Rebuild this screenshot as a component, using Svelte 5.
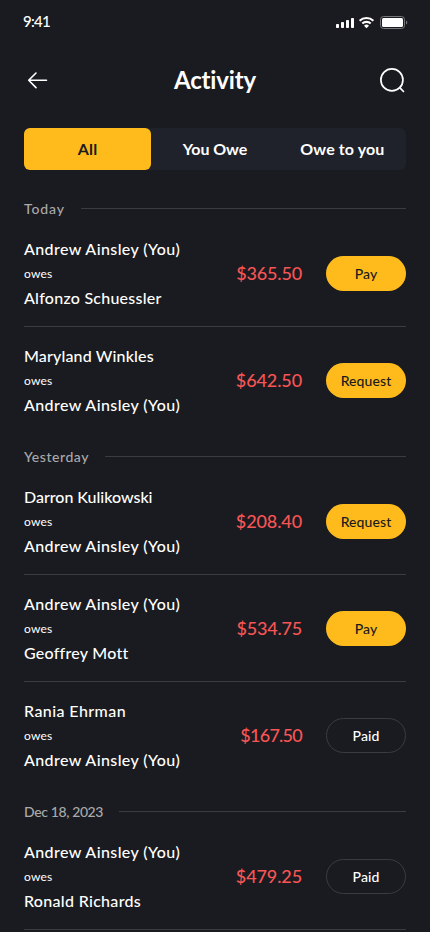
<script>
  const me = { name: 'Andrew Ainsley (You)', track: 0.4 };
  const tabs = [
    { name: 'All', track: 0.2 },
    { name: 'You Owe', track: -0.05 },
    { name: 'Owe to you', track: 0.1 }
  ];
  let active = $state(0);
  const groups = [
    { day: 'Today', track: 0.85, rows: [
      { from: me, to: { name: 'Alfonzo Schuessler', track: 0.25 }, amount: '$365.50', tight: -0.15, action: 'Pay' },
      { from: { name: 'Maryland Winkles', track: 0.15 }, to: me, amount: '$642.50', tight: -0.1, action: 'Request' }
    ] },
    { day: 'Yesterday', track: 0.55, rows: [
      { from: { name: 'Darron Kulikowski', track: -0.02 }, to: me, amount: '$208.40', tight: -0.1, action: 'Request' },
      { from: me, to: { name: 'Geoffrey Mott', track: 0.25 }, amount: '$534.75', tight: -0.2, action: 'Pay' },
      { from: { name: 'Rania Ehrman', track: 0.42 }, to: me, amount: '$167.50', tight: -0.75, action: 'Paid' }
    ] },
    { day: 'Dec 18, 2023', track: -0.38, rows: [
      { from: me, to: { name: 'Ronald Richards', track: 0.31 }, amount: '$479.25', tight: -0.1, action: 'Paid' }
    ] }
  ];
</script>

<div class="screen">
  <div class="status">
    <span class="time">9:41</span>
    <svg class="system" width="72" height="16" viewBox="0 0 72 16" fill="none">
      <g fill="#fff">
        <rect x="0" y="9" width="3" height="4" rx=".8" />
        <rect x="5" y="7" width="3" height="6" rx=".8" />
        <rect x="10" y="5" width="3" height="8" rx=".8" />
        <rect x="15" y="3" width="3" height="10" rx=".8" />
      </g>
      <path d="M23.600 5.700a10 10 0 0 1 13.800 0M26.300 8.600a6.100 6.100 0 0 1 8.400 0" stroke="#fff" stroke-width="2.100" />
      <path d="M28 10.700a3.600 3.600 0 0 1 5 0L30.500 13.300Z" fill="#fff" />
      <rect x="44.500" y="1.500" width="24" height="12" rx="3" stroke="#77787b" />
      <rect x="46" y="3" width="21" height="9" rx="1.500" fill="#fff" />
      <path d="M70 5.500v4q1.300-.5 1.300-2t-1.300-2Z" fill="#77787b" />
    </svg>
  </div>

  <header>
    <svg width="28" height="24" viewBox="0 0 28 24" fill="none" stroke="#fff" stroke-width="1.600" stroke-linecap="round" stroke-linejoin="round">
      <path d="M22.500 12.300H4.700M12 5 4.700 12.300 12 19.600" />
    </svg>
    <h1>Activity</h1>
    <svg width="28" height="28" viewBox="0 0 28 28" fill="none" stroke="#fff" stroke-width="1.700" stroke-linecap="round">
      <circle cx="13.900" cy="13.900" r="11" />
      <path d="m21.700 21.700 3.800 3.800" />
    </svg>
  </header>

  <nav>
    {#each tabs as tab, i}
      <button class="tab" class:active={active === i} style:letter-spacing="{tab.track}px" onclick={() => (active = i)}>{tab.name}</button>
    {/each}
  </nav>

  {#each groups as group}
    <section>
      <div class="day"><h2 style:letter-spacing="{group.track}px">{group.day}</h2><i></i></div>
      {#each group.rows as row}
        <article>
          <div class="people">
            <p style:letter-spacing="{row.from.track}px">{row.from.name}</p>
            <small>owes</small>
            <p style:letter-spacing="{row.to.track}px">{row.to.name}</p>
          </div>
          <strong style:letter-spacing="{row.tight}px">{row.amount}</strong>
          <button class="pill" class:paid={row.action === 'Paid'}>{row.action}</button>
        </article>
      {/each}
    </section>
  {/each}
</div>

<style>
  :global(body) { margin: 0; background: #1a1b20; }
  .screen { box-sizing: border-box; width: 430px; height: 932px; overflow: hidden; padding: 0 24px; background: #1a1b20; color: #fff; font-family: Lato, "Open Sans", sans-serif; }
  .status { display: flex; justify-content: space-between; height: 44px; margin: 0 -2px 0 -1px; }
  .time { padding-top: 11px; font-size: 15px; line-height: 20px; font-weight: 500; letter-spacing: -.7px; }
  .system { margin: 15px 0 0; }
  header { display: flex; align-items: center; justify-content: space-between; height: 72px; margin: 0 0 12px; }
  h1 { margin: 0; font-size: 24px; line-height: 32px; font-weight: 700; letter-spacing: -.15px; }
  nav { display: flex; height: 42px; border-radius: 6px; background: #1f222a; }
  button { padding: 0; border: 0; font: inherit; color: inherit; }
  .tab { flex: 1; padding-bottom: 1px; border-radius: 6px; background: none; font-size: 16px; font-weight: 700; }
  .tab.active { background: #ffbb1b; color: #1a1b20; }
  section { margin-bottom: 11px; }
  nav + section { margin-top: 27px; }
  .day { display: flex; align-items: center; gap: 16px; height: 23px; }
  h2 { margin: 0; font-size: 14px; line-height: 20px; font-weight: 500; color: #a9a9ab; }
  i { flex: 1; height: 1px; background: #393c42; }
  article { box-sizing: border-box; display: flex; align-items: center; height: 107px; padding-top: 1px; border-bottom: 1px solid #393c42; }
  article:last-child { border-color: transparent; }
  section:last-child article { border-color: #393c42; }
  .people { flex: 1; }
  p { margin: 0; font-size: 16px; line-height: 24px; font-weight: 500; }
  small { display: block; font-size: 12px; line-height: 25px; letter-spacing: .2px; }
  strong { margin-right: 24px; padding-bottom: 1px; font-size: 18px; font-weight: 500; color: #f75555; }
  .pill { box-sizing: border-box; width: 80px; height: 35px; border-radius: 17.500px; background: #ffbb1b; color: #1a1b20; font-size: 14px; font-weight: 500; letter-spacing: .1px; }
  .pill.paid { border: 1px solid #393c42; background: none; color: #fff; }
</style>
